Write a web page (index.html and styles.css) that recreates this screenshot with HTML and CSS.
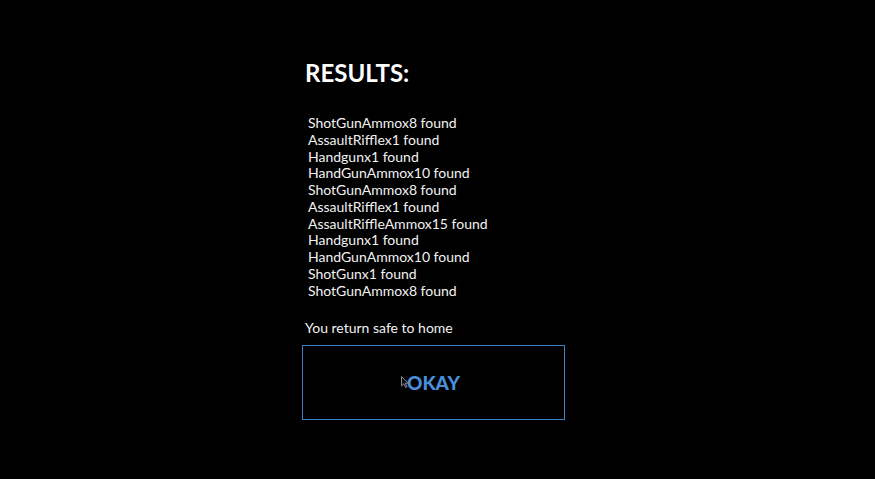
FILE: index.html
```html
<!DOCTYPE html>
<html>
<head>
<meta charset="utf-8">
<link rel="stylesheet" href="styles.css">
</head>
<body>
<main class="page">
  <section class="results">
    <h1 class="title">RESULTS:</h1>
    <ul class="items">
      <li>ShotGunAmmox8 found</li>
      <li>AssaultRifflex1 found</li>
      <li>Handgunx1 found</li>
      <li>HandGunAmmox10 found</li>
      <li>ShotGunAmmox8 found</li>
      <li>AssaultRifflex1 found</li>
      <li>AssaultRiffleAmmox15 found</li>
      <li>Handgunx1 found</li>
      <li>HandGunAmmox10 found</li>
      <li>ShotGunx1 found</li>
      <li>ShotGunAmmox8 found</li>
    </ul>
    <p class="message">You return safe to home</p>
    <button class="okay"><span class="label">OKAY</span><svg class="cursor" viewBox="0 0 8 12" width="8" height="12"><path d="M0.5 0.5 L0.5 10 L2.8 7.8 L4.6 11.5 L6 10.8 L4.3 7.2 L7.5 7.2 Z" fill="#111" stroke="#9a9a9a" stroke-width="0.9"/></svg></button>
  </section>
</main>
</body>
</html>
```
FILE: styles.css
```css
html, body {
  margin: 0;
  padding: 0;
  background: #000;
  height: 100%;
}
body {
  font-family: Lato, "Liberation Sans", sans-serif;
  color: #f2f2f2;
}
.page {
  padding: 58px 0 0 302px;
}
.results {
  width: 263px;
  display: flex;
  flex-direction: column;
}
.title {
  margin: 0 0 0 3px;
  font-size: 24px;
  font-weight: 700;
  line-height: 29px;
  color: #fff;
}
.items {
  list-style: none;
  margin: 28px 0 0 6px;
  padding: 0;
  font-size: 14px;
  line-height: 16.75px;
}
.message {
  margin: 20px 0 0 3px;
  font-size: 14px;
  line-height: 17px;
}
.okay {
  position: relative;
  margin-top: 9px;
  height: 75px;
  width: 263px;
  background: #000;
  border: 1px solid #3f7fc6;
  display: flex;
  align-items: center;
  justify-content: center;
  padding: 0;
  font-family: Lato, "Liberation Sans", sans-serif;
  font-size: 19px;
  font-weight: 900;
  color: #4a8fdb;
}
.cursor {
  position: absolute;
  left: 98px;
  top: 30px;
}
```
